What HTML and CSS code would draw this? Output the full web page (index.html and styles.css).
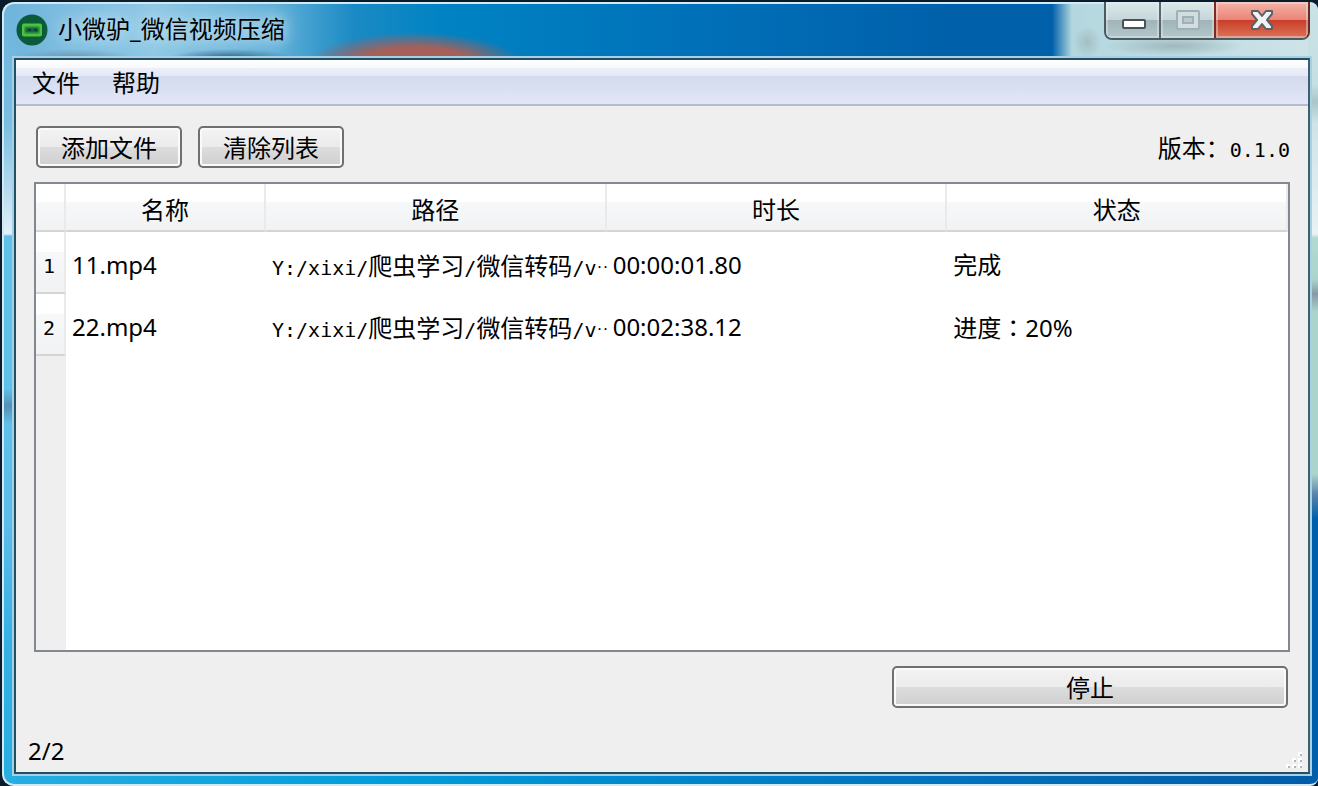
FILE: index.html
```html
<!DOCTYPE html>
<html lang="zh-CN">
<head>
<meta charset="utf-8">
<title>小微驴_微信视频压缩</title>
<link rel="stylesheet" href="styles.css">
</head>
<body>
<div class="window">
  <div class="glass">
    <header class="titlebar">
      <svg class="app-icon" width="32" height="32" viewBox="0 0 32 32" aria-hidden="true">
        <circle cx="16" cy="16" r="15.5" fill="#0b5a3a"/>
        <rect x="6" y="9.500" width="20" height="13" rx="2" fill="#4cc23f"/>
        <rect x="8.500" y="12.500" width="15" height="7" rx="1.500" fill="#15683c"/>
        <rect x="9" y="13" width="14" height="6" fill="none" stroke="#3aa63c"/>
        <path d="M12 15h3v2h-3zM18 15h3v2h-3z" fill="#0a4030"/>
      </svg>
      <h1 class="title">小微驴_微信视频压缩</h1>
      <div class="controls">
        <button class="control" type="button" aria-label="最小化">
          <svg width="24" height="10" viewBox="0 0 24 10"><rect x="1" y="1" width="22" height="8" rx="1" fill="#fff" stroke="#4a5257" stroke-width="2"/></svg>
        </button>
        <button class="control control-max" type="button" aria-label="最大化" disabled>
          <svg width="24" height="20" viewBox="0 0 24 20"><rect x="1" y="1" width="22" height="18" rx="1" fill="#d2dde0" stroke="#9fb0b7" stroke-width="2"/><rect x="7" y="7" width="10" height="6" fill="#b9c9ce" stroke="#9fb0b7" stroke-width="2"/></svg>
        </button>
        <button class="control control-close" type="button" aria-label="关闭">
          <svg width="24" height="20" viewBox="0 0 24 20"><path d="M2 1h6l4 5 4-5h6v3l-5 6 5 6v3h-6l-4-5-4 5H2v-3l5-6-5-6z" fill="#f2f2f3" stroke="#59616a" stroke-width="2" stroke-linejoin="round"/></svg>
        </button>
      </div>
    </header>
    <div class="client">
      <nav class="menubar">
        <button class="menu" type="button">文件</button>
        <button class="menu" type="button">帮助</button>
      </nav>
      <main class="content">
        <div class="toolbar">
          <button class="push" type="button">添加文件</button>
          <button class="push" type="button">清除列表</button>
          <span class="version">版本：<span class="mono">0.1.0</span></span>
        </div>
        <div class="list">
          <table class="files">
            <colgroup><col class="col-index"><col class="col-name"><col><col><col></colgroup>
            <thead>
              <tr><td></td><th scope="col">名称</th><th scope="col">路径</th><th scope="col">时长</th><th scope="col">状态</th></tr>
            </thead>
            <tbody>
              <tr>
                <th scope="row">1</th><td>11.mp4</td>
                <td class="path"><span class="mono">Y:/xixi/</span>爬虫学习<span class="mono">/</span>微信转码<span class="mono">/v</span><span class="dots">··</span></td>
                <td>00:00:01.80</td><td>完成</td>
              </tr>
              <tr>
                <th scope="row">2</th><td>22.mp4</td>
                <td class="path"><span class="mono">Y:/xixi/</span>爬虫学习<span class="mono">/</span>微信转码<span class="mono">/v</span><span class="dots">··</span></td>
                <td>00:02:38.12</td><td>进度<span class="mid-colon" lang="zh-TW">：</span>20%</td>
              </tr>
            </tbody>
          </table>
        </div>
        <div class="actions"><button class="push push-wide" type="button">停止</button></div>
      </main>
      <footer class="statusbar">
        <span>2/2</span>
        <svg class="grip" width="18" height="18" viewBox="0 0 18 18" aria-hidden="true">
          <path d="M12 0h4v4h-4zM6 6h4v4H6zM12 6h4v4h-4zM0 12h4v4H0zM6 12h4v4H6zM12 12h4v4h-4z" fill="#fff"/>
          <path d="M14 2h2v2h-2zM8 8h2v2H8zM14 8h2v2h-2zM2 14h2v2H2zM8 14h2v2H8zM14 14h2v2h-2z" fill="#a9b8bf"/>
        </svg>
      </footer>
    </div>
  </div>
</div>
</body>
</html>
```
FILE: styles.css
```css
* { box-sizing: border-box; }

body {
  margin: 0;
  background: #0a1c2a;
  color: #000;
  font: 24px/32px "Noto Sans", "Noto Sans CJK SC", sans-serif;
}

button { font: inherit; color: inherit; }

.window {
  display: flex;
  min-height: 100vh;
  padding: 2px 0 0 2px;
}

.glass {
  flex: 1;
  min-width: 0;
  display: flex;
  flex-direction: column;
  padding: 0 8px 10px 10px;
  border: 2px solid #d3e9f3;
  border-right: 0;
  border-radius: 12px 8px 8px 12px;
  background:
    linear-gradient(#6fb4dc 0, #79bfe2 120px, #b9dcf0 190px, #e2f1f8 230px, #5fc0ea 232px, #5fc0ea 385px, #5490b5 402px, #5fc0ea 420px, #5cbcea 520px, #35b0e4 640px, #27aee2) left / 12px 100% no-repeat,
    linear-gradient(#c9e2e6 0, #c5dfe3 80px, #a9c6ca 98px, #cfe4e8 120px, #e9f2f5 230px, #b2d8d2 234px, #abd5cc 275px, #8699a6 290px, #abd5cc 308px, #abd5cc 470px, #5a84aa 490px, #005faa 515px) right / 10px 100% no-repeat,
    linear-gradient(90deg, #27aee2, #009ddb 30%, #0078c4 65%, #005ca8) bottom / 100% 12px no-repeat,
    radial-gradient(ellipse 110px 34px at 411px 62px, #a5605a 55%, #a5605a00) no-repeat,
    radial-gradient(ellipse 60px 8px at 226px 53px, #35678a, #35678a00) no-repeat,
    radial-gradient(ellipse 60px 8px at 70px 53px, #6b98b0, #6b98b000) no-repeat,
    radial-gradient(ellipse 70px 10px at 1170px 42px, #9fb8bd, #9fb8bd00) no-repeat,
    radial-gradient(ellipse 14px 16px at 1083px 38px, #a3bfc3, #a3bfc300) no-repeat,
    linear-gradient(90deg, #6fb4dc 0, #8fc8e4 150px, #62b0d8 270px, #1a8ac4 350px, #0083c3 440px, #0070b8 700px, #0060aa 950px, #0060aa 1048px, #b4d7df 1068px, #cde3e7 1300px);
}

.titlebar {
  display: flex;
  align-items: flex-start;
  flex: 0 0 54px;
}

.app-icon { margin: 10px 10px 0 2px; }

.title {
  margin: 9px 0 0;
  font-size: 24px;
  font-weight: 400;
  line-height: 32px;
  text-shadow: 0 0 12px #c5e3f0, 0 0 18px #b5dbed, 0 0 24px #a5d3ea;
}

.controls {
  display: flex;
  height: 38px;
  margin: -2px 0 0 auto;
  border: 2px solid #4c5a61;
  border-top: 0;
  border-right-color: #6b2a22;
  border-radius: 0 0 8px 8px;
  overflow: hidden;
}

.control {
  display: flex;
  align-items: center;
  justify-content: center;
  width: 55px;
  padding: 0;
  border: 0;
  border-right: 2px solid #59676e;
  background: linear-gradient(#dce9ea, #c5d6d9 50%, #9fb3b8 50%, #b3c8cc);
  box-shadow: inset 0 0 0 2px #e6f0f266;
}

.control:first-child { padding: 8px 0 0 2px; }

.control-max { border-right-color: #7c2b22; }

.control-close {
  width: 92px;
  border-right: 0;
  background: linear-gradient(#f5b3a6, #e98477 50%, #c83d27 50%, #dc7459);
}

.client {
  flex: 1;
  display: flex;
  flex-direction: column;
  border: 2px solid #204f66;
  border-right-color: #3d5f6e;
  box-shadow: 0 0 0 2px #a9cfe3;
  background: #efefef;
}

.menubar {
  display: flex;
  height: 46px;
  border-bottom: 2px solid #b4bccf;
  background: linear-gradient(#fff, #f8f9fc 8px, #edf0f8 8px, #e4e9f5 16px, #d3dbed 16px, #e2e6f8);
}

.menu {
  padding: 2px 16px 0;
  border: 0;
  background: none;
}

.content {
  flex: 1;
  display: flex;
  flex-direction: column;
  padding: 20px 18px 0;
  font-family: "Noto Sans CJK SC", sans-serif;
}

.toolbar {
  display: flex;
  align-items: center;
  gap: 16px;
  padding-left: 2px;
  margin-bottom: 14px;
}

.version { margin-left: auto; padding-top: 2px; }

.mono { font-family: "DejaVu Sans Mono", monospace; font-size: 20px; }

.push {
  width: 146px;
  height: 42px;
  padding: 0;
  border: 2px solid #707070;
  border-radius: 5px;
  background: linear-gradient(#f3f3f3, #ebebeb 50%, #dddddd 50%, #cfcfcf);
  box-shadow: inset 0 0 0 2px #fafafa;
}

.push-wide { width: 396px; }

.list {
  flex: 1;
  border: 2px solid #828790;
  background: linear-gradient(90deg, #efefef 30px, #fff 30px);
}

.files {
  width: 100%;
  table-layout: fixed;
  border-collapse: separate;
  border-spacing: 0;
}

.col-index { width: 30px; }
.col-name { width: 200px; }

.files th, .files td { font-weight: 400; padding: 0; }

.files thead th, .files thead td {
  height: 48px;
  padding-top: 4px;
  border-right: 2px solid #e9eaeb;
  border-bottom: 2px solid #d5d5d5;
  background: linear-gradient(#fff 18px, #f7f8fa 18px, #f1f2f4);
}

.files tbody th {
  height: 62px;
  padding: 8px 2px 0 0;
  border-right: 2px solid #e9eaeb;
  border-bottom: 2px solid #d5d5d5;
  background: linear-gradient(#fff 20px, #f7f8fa 20px, #f1f2f4);
  font: 20px/32px "DejaVu Sans Mono", monospace;
}

.files tbody td {
  padding: 4px 0 0 6px;
  font-family: "Noto Sans", "Noto Sans CJK SC", sans-serif;
  white-space: nowrap;
}

.files tbody .path { padding-top: 6px; font-family: "Noto Sans CJK SC", sans-serif; }

.dots { font: bold 10px/16px "DejaVu Sans Mono", monospace; vertical-align: 4px; }

.mid-colon { font-family: "Noto Sans CJK TC", sans-serif; }

.actions {
  display: flex;
  justify-content: flex-end;
  padding: 14px 2px 0;
}

.statusbar {
  display: flex;
  align-items: center;
  justify-content: space-between;
  height: 64px;
  padding: 22px 4px 0 12px;
}

.grip { align-self: flex-end; margin-bottom: 2px; }
```
